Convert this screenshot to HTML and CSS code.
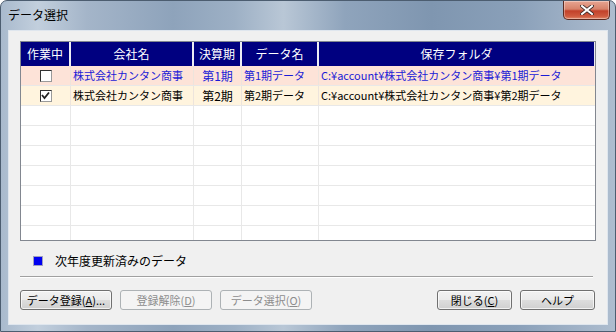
FILE: index.html
```html
<!DOCTYPE html>
<html lang="ja">
<head>
<meta charset="utf-8">
<link rel="stylesheet" href="styles.css">
</head>
<body>
<div class="window">
  <div class="titlebar">
    <span class="title">データ選択</span>
    <div class="close">
      <svg width="14" height="10" viewBox="0 0 14 10"><path d="M2 1 L12 9 M12 1 L2 9" stroke="#3a2a28" stroke-width="3.6" stroke-linecap="square"/><path d="M2 1 L12 9 M12 1 L2 9" stroke="#ffffff" stroke-width="2" stroke-linecap="square"/></svg>
    </div>
  </div>
  <div class="client">
    <div class="grid">
      <div class="row head">
        <div class="c c1">作業中</div>
        <div class="c c2">会社名</div>
        <div class="c c3">決算期</div>
        <div class="c c4">データ名</div>
        <div class="c c5">保存フォルダ</div>
      </div>
      <div class="row r1">
        <div class="c c1"><span class="chk"></span></div>
        <div class="c c2 l">株式会社カンタン商事</div>
        <div class="c c3">第1期</div>
        <div class="c c4 l">第1期データ</div>
        <div class="c c5 l">C:¥account¥株式会社カンタン商事¥第1期データ</div>
      </div>
      <div class="row r2">
        <div class="c c1"><span class="chk on"><svg width="9" height="9" viewBox="0 0 9 9"><path d="M1 4 L3.5 7 L8 1.5" fill="none" stroke="#222" stroke-width="1.8"/></svg></span></div>
        <div class="c c2 l">株式会社カンタン商事</div>
        <div class="c c3">第2期</div>
        <div class="c c4 l">第2期データ</div>
        <div class="c c5 l">C:¥account¥株式会社カンタン商事¥第2期データ</div>
      </div>
      <div class="row"><div class="c c1"></div><div class="c c2"></div><div class="c c3"></div><div class="c c4"></div><div class="c c5"></div></div>
      <div class="row"><div class="c c1"></div><div class="c c2"></div><div class="c c3"></div><div class="c c4"></div><div class="c c5"></div></div>
      <div class="row"><div class="c c1"></div><div class="c c2"></div><div class="c c3"></div><div class="c c4"></div><div class="c c5"></div></div>
      <div class="row"><div class="c c1"></div><div class="c c2"></div><div class="c c3"></div><div class="c c4"></div><div class="c c5"></div></div>
      <div class="row"><div class="c c1"></div><div class="c c2"></div><div class="c c3"></div><div class="c c4"></div><div class="c c5"></div></div>
      <div class="row"><div class="c c1"></div><div class="c c2"></div><div class="c c3"></div><div class="c c4"></div><div class="c c5"></div></div>
      <div class="row"><div class="c c1"></div><div class="c c2"></div><div class="c c3"></div><div class="c c4"></div><div class="c c5"></div></div>
    </div>
    <div class="legend">
      <span class="swatch"></span>
      <span>次年度更新済みのデータ</span>
    </div>
    <div class="sep"></div>
    <div class="buttons">
      <button class="btn wide">データ登録(<u>A</u>)...</button>
      <button class="btn wide" disabled>登録解除(<u>D</u>)</button>
      <button class="btn wide" disabled>データ選択(<u>O</u>)</button>
      <span class="spacer"></span>
      <button class="btn narrow">閉じる(<u>C</u>)</button>
      <button class="btn narrow">ヘルプ</button>
    </div>
  </div>
</div>
</body>
</html>
```

FILE: styles.css
```css
* { box-sizing: border-box; }
html, body { margin: 0; padding: 0; background: #ffffff; }
body {
  font-family: "Noto Sans CJK JP", "Noto Sans", sans-serif;
  font-size: 12px;
  line-height: 1;
  color: #000;
}
.window {
  width: 616px;
  height: 332px;
  border-radius: 7px 7px 0 0;
  border: 1px solid #4c5d70;
  background: linear-gradient(90deg, #a9bacd 0%, #c2cfdd 6%, #a4b5c9 14%, #8ea3bb 28%, #9db0c5 38%, #b9c7d6 46%, #8fa4bc 56%, #7f96b0 70%, #8aa0b9 84%, #aebdcf 100%);
  display: flex;
  flex-direction: column;
  overflow: hidden;
}
.titlebar {
  height: 29px;
  display: flex;
  align-items: flex-start;
}
.title {
  margin: 8px 0 0 7px;
  font-size: 12px;
  color: #000;
}
.close {
  margin-left: auto;
  margin-right: 5px;
  width: 47px;
  height: 19px;
  border: 1px solid #5b2b22;
  border-top: none;
  border-radius: 0 0 5px 5px;
  background: linear-gradient(180deg, #e7a592 0%, #d7826a 45%, #c2412a 55%, #cf5b3f 85%, #e08a6c 100%);
  display: flex;
  align-items: center;
  justify-content: center;
  box-shadow: inset 0 0 0 1px rgba(255,255,255,0.35);
}
.client {
  margin: 0 7px 6px 7px;
  flex: 1;
  background: #f0f0f0;
  border: 1px solid #dfe6ee;
  padding: 10px 0 0 11px;
  display: flex;
  flex-direction: column;
}
.grid {
  width: 576px;
  height: 200px;
  border: 1px solid #828790;
  background: #ffffff;
  overflow: hidden;
}
.row {
  display: flex;
  height: 20px;
  border-bottom: 1px solid #e8e8e8;
  font-size: 11px;
}
.row.head {
  height: 24px;
  border-bottom: none;
  background: #ffffff;
  font-size: 12px;
}
.c {
  height: 100%;
  display: flex;
  align-items: center;
  justify-content: center;
  border-right: 1px solid #e8e8e8;
  white-space: nowrap;
  overflow: hidden;
}
.c.l { justify-content: flex-start; padding-left: 2px; }
.c1 { width: 50px; }
.c2 { width: 123px; }
.c3 { width: 48px; font-size: 12px; }
.c4 { width: 77px; }
.c5 { flex: 1; border-right: none; }
.head .c {
  background: #000080;
  color: #ffffff;
  border-right: 2px solid #ececf4;
}
.head .c5 { border-right: 1px solid #ececf4; }
.r1 { background: #fde3d8; color: #1b1bd6; }
.r2 { background: #fff4de; }
.r1 .c, .r2 .c { border-right-color: #ede4dc; }
.chk {
  width: 12px;
  height: 12px;
  background: #ffffff;
  border: 1px solid #333;
  border-right-color: #9a9a9a;
  border-bottom-color: #9a9a9a;
  display: flex;
  align-items: center;
  justify-content: center;
}
.legend {
  display: flex;
  align-items: center;
  gap: 12px;
  margin: 15px 0 0 13px;
  height: 10px;
}
.swatch {
  width: 10px;
  height: 10px;
  background: #0000f0;
  border: 1px solid #a0a0c0;
}
.sep {
  width: 573px;
  height: 1px;
  background: #a0a0a0;
  margin-top: 10px;
  border-bottom: 1px solid #ffffff;
  box-sizing: content-box;
}
.buttons {
  display: flex;
  gap: 8px;
  margin-top: 12px;
  width: 575px;
}
.spacer { flex: 1; }
.btn {
  height: 20px;
  font-family: inherit;
  font-size: 11px;
  line-height: 1;
  padding: 0;
  color: #000;
  border: 1px solid #707070;
  border-radius: 3px;
  background: linear-gradient(180deg, #f2f2f2 0%, #ebebeb 48%, #dddddd 52%, #cfcfcf 100%);
  box-shadow: inset 0 0 0 1px rgba(255,255,255,0.7);
}
.btn u { text-underline-offset: 1px; }
.btn:disabled {
  color: #8d8d8d;
  border-color: #adb2b5;
  background: #f4f4f4;
  box-shadow: none;
}
.wide { width: 92px; }
.narrow { width: 75px; }
```
